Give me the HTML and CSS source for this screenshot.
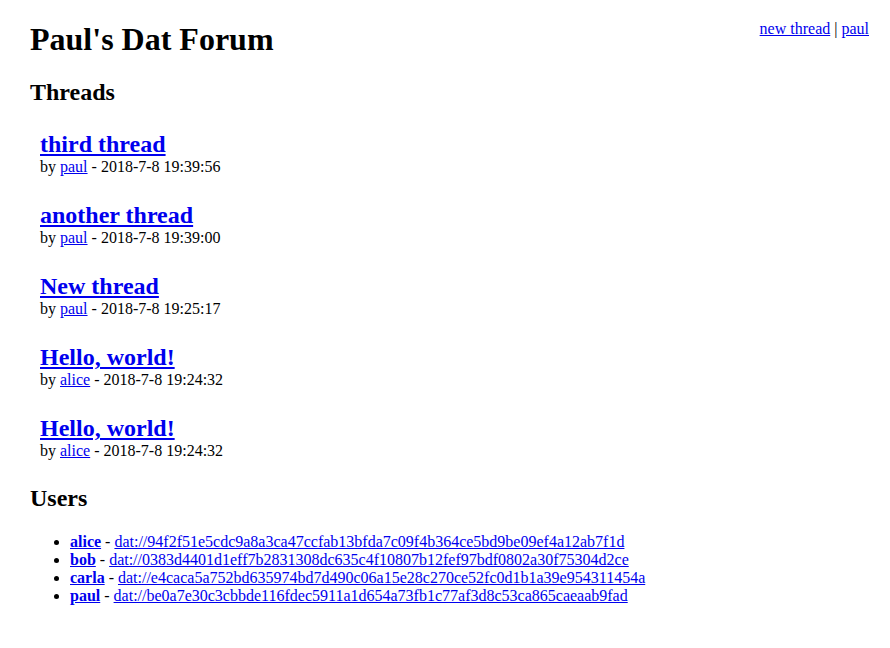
FILE: index.html
```html
<!DOCTYPE html>
<html>
<head>
<meta charset="utf-8">
<title>Paul's Dat Forum</title>
<link rel="stylesheet" href="styles.css">
</head>
<body>
<header class="top">
  <h1 class="site-title">Paul's Dat Forum</h1>
  <nav class="nav"><a href="#">new thread</a> | <a href="#">paul</a></nav>
</header>
<main>
  <h2 class="section-title">Threads</h2>
  <div class="threads">
    <div class="thread">
      <h3 class="thread-title"><a href="#">third thread</a></h3>
      <div class="meta">by <a href="#">paul</a> - 2018-7-8 19:39:56</div>
    </div>
    <div class="thread">
      <h3 class="thread-title"><a href="#">another thread</a></h3>
      <div class="meta">by <a href="#">paul</a> - 2018-7-8 19:39:00</div>
    </div>
    <div class="thread">
      <h3 class="thread-title"><a href="#">New thread</a></h3>
      <div class="meta">by <a href="#">paul</a> - 2018-7-8 19:25:17</div>
    </div>
    <div class="thread">
      <h3 class="thread-title"><a href="#">Hello, world!</a></h3>
      <div class="meta">by <a href="#">alice</a> - 2018-7-8 19:24:32</div>
    </div>
    <div class="thread">
      <h3 class="thread-title"><a href="#">Hello, world!</a></h3>
      <div class="meta">by <a href="#">alice</a> - 2018-7-8 19:24:32</div>
    </div>
  </div>
  <h2 class="section-title users-title">Users</h2>
  <ul class="users">
    <li><a class="uname" href="#">alice</a> - <a href="#">dat://94f2f51e5cdc9a8a3ca47ccfab13bfda7c09f4b364ce5bd9be09ef4a12ab7f1d</a></li>
    <li><a class="uname" href="#">bob</a> - <a href="#">dat://0383d4401d1eff7b2831308dc635c4f10807b12fef97bdf0802a30f75304d2ce</a></li>
    <li><a class="uname" href="#">carla</a> - <a href="#">dat://e4caca5a752bd635974bd7d490c06a15e28c270ce52fc0d1b1a39e954311454a</a></li>
    <li><a class="uname" href="#">paul</a> - <a href="#">dat://be0a7e30c3cbbde116fdec5911a1d654a73fb1c77af3d8c53ca865caeaab9fad</a></li>
  </ul>
</main>
</body>
</html>
```
FILE: styles.css
```css
html, body {
  background: #fff;
}
body {
  margin: 0;
  padding: 0 21px 0 30px;
  font-family: "Liberation Serif", "Times New Roman", serif;
  font-size: 16px;
  color: #000;
}
a {
  color: #0000ee;
}
.top {
  display: flex;
  justify-content: space-between;
  align-items: flex-start;
}
.site-title {
  font-size: 32px;
  margin: 21px 0 0;
}
.nav {
  margin-top: 20px;
}
.section-title {
  font-size: 24px;
  margin: 21px 0 25px;
}
.users-title {
  margin: 24px 0 0;
}
.threads {
  display: flex;
  flex-direction: column;
  gap: 25px;
  padding-left: 10px;
}
.thread-title {
  font-size: 24px;
  margin: 0;
  line-height: 26px;
}
.meta {
  line-height: 20px;
}
.users {
  margin: 21px 0 0;
  padding-left: 40px;
  font-size: 16px;
  line-height: 18px;
}
.uname {
  font-weight: bold;
}
```
